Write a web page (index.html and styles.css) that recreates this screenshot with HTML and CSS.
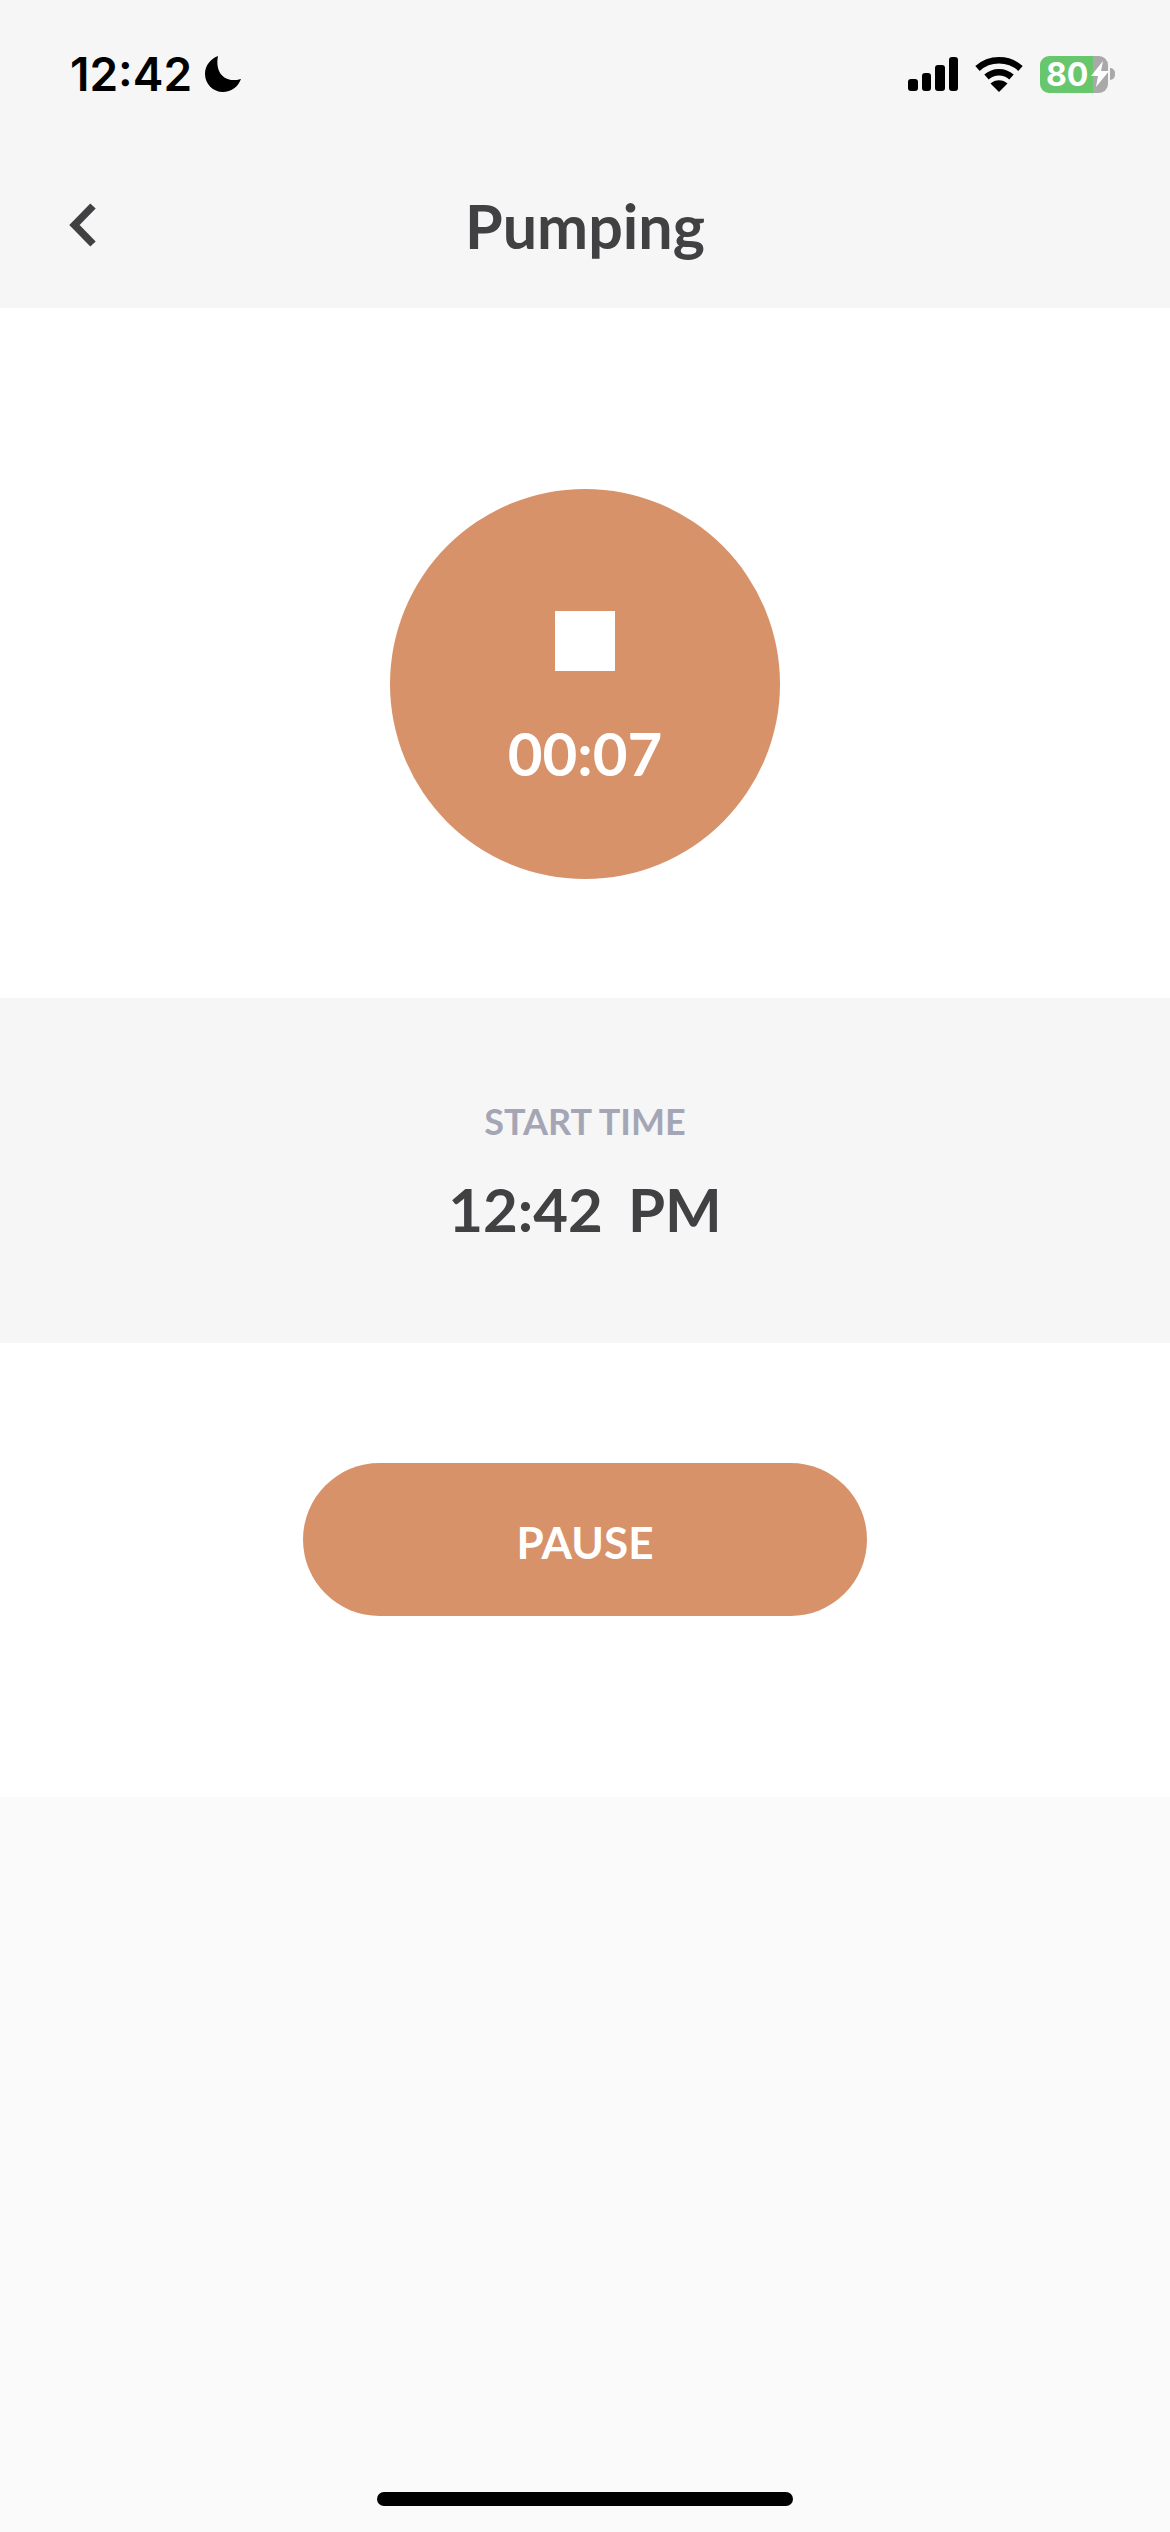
FILE: index.html
```html
<!DOCTYPE html>
<html>
<head>
  <link rel="stylesheet" href="styles.css">
</head>
<body>
  <div class="app">
    <div class="top">
      <div class="status">
        <div class="status-left">
          <span class="clock">12:42</span>
          <svg class="moon" viewBox="0 0 36 36"><path d="M13 0C5 3 0 10 0 18c0 10 8 18 18 18 8 0 15-5 18-13-3 1-5 1-8 1C18 24 10 15 13 0z" fill="#000"/></svg>
        </div>
        <div class="status-right">
          <div class="signal">
            <span class="bar bar-1"></span>
            <span class="bar bar-2"></span>
            <span class="bar bar-3"></span>
            <span class="bar bar-4"></span>
          </div>
          <svg class="wifi" viewBox="0 0 48 36">
            <path d="M2.5 12.5C14.5 1.500 33.500 1.500 45.500 12.500" fill="none" stroke="#000" stroke-width="6.500"/>
            <path d="M11.500 21C18.500 14.500 29.500 14.500 36.500 21" fill="none" stroke="#000" stroke-width="6.500"/>
            <path d="M15.500 27.500C20 23 28 23 32.500 27.500L24 36z" fill="#000"/>
          </svg>
          <div class="battery">
            <div class="battery-body">
              <span class="battery-level">80</span>
              <svg class="bolt" viewBox="0 0 18 26"><path d="M12 0L0 15h7L5 26 18 10h-8z" fill="#fff"/></svg>
            </div>
            <span class="battery-nub"></span>
          </div>
        </div>
      </div>
      <div class="nav">
        <svg class="back" viewBox="0 0 34 48"><path d="M31 5L12.500 24 31 43" fill="none" stroke="#414042" stroke-width="7.500"/></svg>
        <h1 class="title">Pumping</h1>
        <span></span>
      </div>
    </div>

    <div class="timer-section">
      <div class="timer">
        <span class="stop"></span>
        <span class="elapsed">00:07</span>
      </div>
    </div>

    <div class="start-section">
      <div class="start-label">START TIME</div>
      <div class="start-value">12:42&nbsp; PM</div>
    </div>

    <div class="action-section">
      <button class="pause">PAUSE</button>
    </div>

    <div class="rest">
      <span class="home-bar"></span>
    </div>
  </div>
</body>
</html>
```

FILE: styles.css
```css
body {
  margin: 0;
  background: #fafafa;
  font-family: 'Lato', sans-serif;
}

.app {
  display: flex;
  flex-direction: column;
  height: 2532px;
  overflow: hidden;
}

.top {
  height: 308px;
  background: #f6f6f6;
}

.status {
  display: flex;
  justify-content: space-between;
  align-items: center;
  height: 148px;
  padding: 0 55px 0 70px;
  box-sizing: border-box;
}

.status-left {
  display: flex;
  align-items: center;
  gap: 13px;
}

.clock {
  font-family: 'Inter', sans-serif;
  font-size: 46px;
  font-weight: 600;
  line-height: 56px;
  color: #000;
}

.moon {
  width: 36px;
  height: 36px;
}

.status-right {
  display: flex;
  align-items: center;
  gap: 17px;
}

.signal {
  display: flex;
  align-items: flex-end;
  gap: 4px;
  height: 34px;
}

.bar {
  width: 9.5px;
  border-radius: 3px;
  background: #000;
}

.bar-1 { height: 12px; }
.bar-2 { height: 18px; }
.bar-3 { height: 26px; }
.bar-4 { height: 34px; }

.wifi {
  width: 48px;
  height: 36px;
}

.battery {
  display: flex;
  align-items: center;
  gap: 2px;
}

.battery-body {
  display: flex;
  align-items: center;
  gap: 3px;
  width: 68px;
  height: 37px;
  padding-left: 6px;
  box-sizing: border-box;
  border-radius: 9px;
  background: linear-gradient(90deg, #68c76d 78%, #a9a9a9 78%);
}

.battery-level {
  font-family: 'Inter', sans-serif;
  font-size: 32px;
  font-weight: 700;
  line-height: 37px;
  color: #fff;
}

.bolt {
  width: 18px;
  height: 26px;
  flex-shrink: 0;
}

.battery-nub {
  width: 5px;
  height: 12px;
  border-radius: 0 5px 5px 0;
  background: #a9a9a9;
}

.nav {
  display: grid;
  grid-template-columns: 1fr auto 1fr;
  align-items: center;
  height: 160px;
  padding: 0 0 4px 62px;
  box-sizing: border-box;
}

.back {
  width: 34px;
  height: 48px;
  margin-bottom: 2px;
}

.title {
  margin: 0 0 0 -62px;
  font-size: 61px;
  font-weight: 700;
  line-height: 70px;
  color: #414042;
}

.timer-section {
  display: flex;
  justify-content: center;
  align-items: flex-start;
  height: 690px;
  padding-top: 181px;
  box-sizing: border-box;
  background: #fff;
}

.timer {
  display: flex;
  flex-direction: column;
  align-items: center;
  width: 390px;
  height: 390px;
  padding-top: 122px;
  box-sizing: border-box;
  border-radius: 50%;
  background: #d7926a;
}

.stop {
  width: 60px;
  height: 60px;
  background: #fff;
}

.elapsed {
  margin-top: 46px;
  font-size: 60px;
  font-weight: 700;
  line-height: 72px;
  color: #fff;
}

.start-section {
  display: flex;
  flex-direction: column;
  align-items: center;
  height: 345px;
  padding-top: 102px;
  box-sizing: border-box;
  background: #f6f6f6;
}

.start-label {
  font-size: 36px;
  font-weight: 700;
  line-height: 42px;
  color: #a4a6b5;
}

.start-value {
  margin-top: 30px;
  font-size: 60px;
  font-weight: 700;
  line-height: 74px;
  word-spacing: -2px;
  color: #414042;
}

.action-section {
  display: flex;
  justify-content: center;
  height: 454px;
  padding-top: 120px;
  box-sizing: border-box;
  background: #fff;
}

.pause {
  width: 564px;
  height: 153px;
  padding: 4px 0 0;
  border: none;
  border-radius: 77px;
  background: #d7926a;
  font-family: 'Lato', sans-serif;
  font-size: 44px;
  font-weight: 700;
  color: #fff;
}

.rest {
  flex: 1;
  display: flex;
  justify-content: center;
  align-items: flex-end;
  padding-bottom: 26px;
}

.home-bar {
  width: 416px;
  height: 14px;
  border-radius: 7px;
  background: #000;
}
```
